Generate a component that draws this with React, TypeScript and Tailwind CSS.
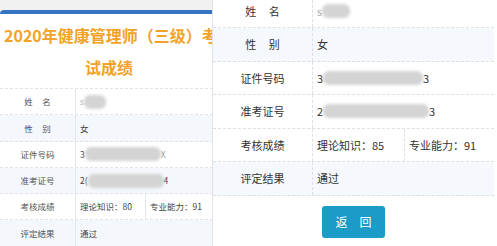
import React from 'react';

const Blur: React.FC<{ w: number }> = ({ w }) => (
  <span
    className="inline-block h-[14px] rounded-[6px] bg-[#d4d4d4] blur-[1.5px] align-middle"
    style={{ width: w }}
  />
);

export default function App() {
  const leftRow = 'flex h-[26.3px] border-b border-dashed border-[#e0e4ea]';
  const leftLabel = 'w-[76px] shrink-0 flex items-center justify-center border-r border-[#e3e7ee] text-[#555]';
  const leftValue = 'flex-1 flex items-center pl-[4px] text-[#444]';

  const rRow = 'flex h-[33.5px] border-b border-dashed border-[#dcdfe4]';
  const rLabel = 'w-[100px] shrink-0 flex items-center justify-center border-r border-dashed border-[#dcdfe4] text-[#333]';
  const rValue = 'flex-1 flex items-center pl-[4px] text-[#333]';

  return (
    <div className="flex w-[497px] h-[246px] overflow-hidden bg-white font-['Noto_Sans_CJK_SC','Noto_Sans',sans-serif]">
      {/* Left screenshot */}
      <div className="w-[213px] shrink-0 overflow-hidden bg-[#f1f1f1] pt-[10px] border-r border-[#e2e2e2]">
        <div className="w-[218px] bg-white">
          <div className="h-[4px] bg-[#3574c3] rounded-tl-[4px]" />
          <div className="pt-[5px] pb-[5px] pl-[4px] text-[16px] font-bold leading-[32px] text-[#f2a227] whitespace-nowrap">
            <div>2020年健康管理师（三级）考</div>
            <div className="text-center pr-[4px]">试成绩</div>
          </div>
          <div className="text-[8.5px] border-t border-dashed border-[#e0e4ea]">
            <div className={`${leftRow} bg-white`}>
              <div className={leftLabel}>姓&nbsp;&nbsp;&nbsp;&nbsp;&nbsp;名</div>
              <div className={leftValue}>
                <span className="text-[#aaa] blur-[0.5px]">s</span>
                <Blur w={22} />
              </div>
            </div>
            <div className={`${leftRow} bg-[#f4f7fb]`}>
              <div className={leftLabel}>性&nbsp;&nbsp;&nbsp;&nbsp;&nbsp;别</div>
              <div className={leftValue}>女</div>
            </div>
            <div className={`${leftRow} bg-white`}>
              <div className={leftLabel}>证件号码</div>
              <div className={leftValue}>
                <span>3</span>
                <Blur w={76} />
                <span className="text-[#999]">X</span>
              </div>
            </div>
            <div className={`${leftRow} bg-[#f4f7fb]`}>
              <div className={leftLabel}>准考证号</div>
              <div className={leftValue}>
                <span>2(</span>
                <Blur w={76} />
                <span>4</span>
              </div>
            </div>
            <div className={`${leftRow} bg-white`}>
              <div className={leftLabel}>考核成绩</div>
              <div className="w-[70px] shrink-0 flex items-center pl-[4px] border-r border-[#e3e7ee] text-[#444]">理论知识：80</div>
              <div className={leftValue}>专业能力：91</div>
            </div>
            <div className={`${leftRow} bg-[#f4f7fb]`}>
              <div className={leftLabel}>评定结果</div>
              <div className={leftValue}>通过</div>
            </div>
          </div>
        </div>
      </div>

      {/* Right screenshot */}
      <div className="flex-1 flex flex-col bg-white pr-[3px]">
        <div className="-mt-[5.5px] text-[11px]">
          <div className={`${rRow} bg-white`}>
            <div className={rLabel}>姓&nbsp;&nbsp;&nbsp;&nbsp;&nbsp;名</div>
            <div className={rValue}>
              <span className="text-[#aaa] blur-[0.5px]">s</span>
              <Blur w={28} />
            </div>
          </div>
          <div className={`${rRow} bg-[#f5f8fc]`}>
            <div className={rLabel}>性&nbsp;&nbsp;&nbsp;&nbsp;&nbsp;别</div>
            <div className={rValue}>女</div>
          </div>
          <div className={`${rRow} bg-white`}>
            <div className={rLabel}>证件号码</div>
            <div className={rValue}>
              <span>3</span>
              <Blur w={100} />
              <span>3</span>
            </div>
          </div>
          <div className={`${rRow} bg-white`}>
            <div className={rLabel}>准考证号</div>
            <div className={rValue}>
              <span>2</span>
              <Blur w={106} />
              <span>3</span>
            </div>
          </div>
          <div className={`${rRow} bg-white`}>
            <div className={rLabel}>考核成绩</div>
            <div className="w-[92px] shrink-0 flex items-center pl-[4px] border-r border-dashed border-[#dcdfe4] text-[#333]">理论知识：85</div>
            <div className={rValue}>专业能力：91</div>
          </div>
          <div className={`${rRow} bg-[#f5f8fc]`}>
            <div className={rLabel}>评定结果</div>
            <div className={rValue}>通过</div>
          </div>
        </div>
        <div className="flex justify-center pt-[10px]">
          <button className="w-[63px] h-[32px] rounded-[3px] bg-[#1b9bc7] text-white text-[12px] tracking-[12px] pl-[12px]">
            返回
          </button>
        </div>
      </div>
    </div>
  );
}
